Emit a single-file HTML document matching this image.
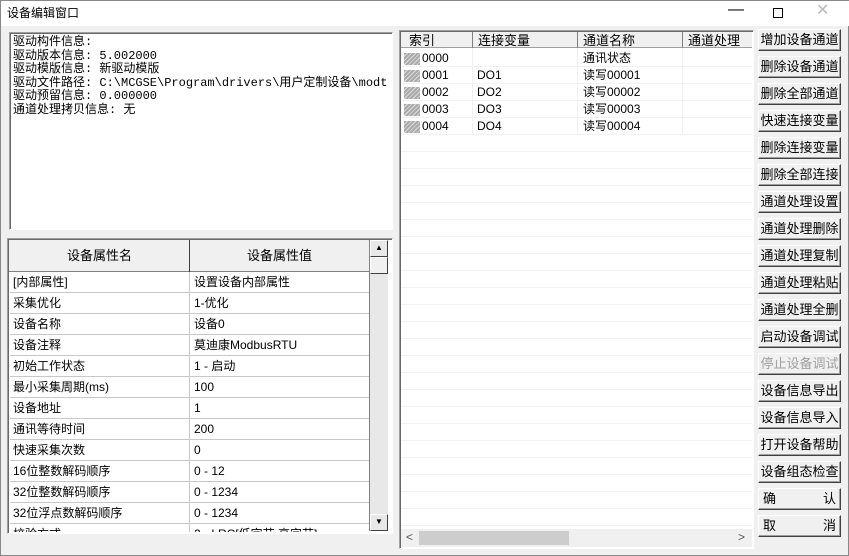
<!DOCTYPE html><html><head><meta charset="utf-8"><style>
*{box-sizing:border-box;margin:0;padding:0}
body{width:849px;height:556px;background:#f0f0f0;font-family:"Liberation Sans","Noto Sans CJK SC","WenQuanYi Zen Hei",sans-serif;font-size:12px;color:#000;position:relative;overflow:hidden;border:1px solid #888}
.a{position:absolute}
.title{left:0;top:0;width:849px;height:25px;background:#fff}
.sunk{border:1px solid;border-color:#a0a0a0 #fff #fff #a0a0a0;box-shadow:inset 1px 1px 0 #696969}
.t{position:absolute;white-space:nowrap;line-height:13px}
.btn{position:absolute;left:757px;width:83px;height:22px;background:#f0f0f0;border:1px solid;border-color:#fff #404040 #404040 #fff;box-shadow:inset -1px -1px 0 #a0a0a0;font-size:13px;line-height:20px;text-align:center;letter-spacing:0px}
.row{position:absolute;left:9px;width:359px;height:21px;border-bottom:1px solid #c8c8c8;font-size:12px;line-height:21px}
.row span{position:absolute;left:3px}
.row b{font-weight:normal;position:absolute;left:184px}
.lr{position:absolute;left:401px;width:350px;height:17px;font-size:12px;line-height:17px;border-bottom:1px solid #f2f2f2}
.ic{position:absolute;left:2px;top:3px;width:16px;height:12px;background:repeating-linear-gradient(135deg,#aaa 0 2px,#ddd 2px 3px)}
</style></head><body>
<div class="a title"></div>
<div class="t" style="left:6px;top:6px;font-size:12px">设备编辑窗口</div>
<div class="t" style="left:727px;top:2px;font-size:16px">—</div>
<div class="a" style="left:772px;top:7px;width:10px;height:10px;border:1px solid #000"></div>
<div class="t" style="left:815px;top:3px;font-size:16px;color:#bbb">✕</div>

<div class="a sunk" style="left:8px;top:31px;width:384px;height:198px;background:#fff"></div>
<div class="t" style="left:12px;top:35px;line-height:13.5px;font-family:'Liberation Mono','Noto Sans CJK SC',monospace">驱动构件信息:<br>驱动版本信息: 5.002000<br>驱动模版信息: 新驱动模版<br>驱动文件路径: C:\MCGSE\Program\drivers\用户定制设备\modt<br>驱动预留信息: 0.000000<br>通道处理拷贝信息: 无</div>

<div class="a sunk" style="left:6px;top:237px;width:386px;height:296px;background:#fff"></div>
<div class="a" style="left:8px;top:239px;width:360px;height:32px;background:#f0f0f0;border-bottom:1px solid #808080"></div>
<div class="a" style="left:188px;top:239px;width:1px;height:292px;background:#c8c8c8"></div>
<div class="a" style="left:188px;top:239px;width:1px;height:32px;background:#404040"></div>
<div class="t" style="left:66px;top:248px;font-size:13px">设备属性名</div>
<div class="t" style="left:246px;top:248px;font-size:13px">设备属性值</div>
<div class="a" style="left:368px;top:239px;width:19px;height:291px;background:#e8e8e8;border-left:1px solid #808080"></div>
<div class="a" style="left:369px;top:239px;width:18px;height:17px;border:1px solid;border-color:#fff #404040 #404040 #fff;font-size:8px;text-align:center;line-height:14px">▲</div>
<div class="a" style="left:369px;top:256px;width:18px;height:17px;border:1px solid;border-color:#fff #404040 #404040 #fff;background:#f0f0f0"></div>
<div class="a" style="left:369px;top:513px;width:18px;height:17px;border:1px solid;border-color:#fff #404040 #404040 #fff;font-size:8px;text-align:center;line-height:14px">▼</div>
<div style="position:absolute;left:0;top:0;width:368px;height:531px;overflow:hidden">
<div class="row" style="top:271px"><span>[内部属性]</span><b>设置设备内部属性</b></div>
<div class="row" style="top:292px"><span>采集优化</span><b>1-优化</b></div>
<div class="row" style="top:313px"><span>设备名称</span><b>设备0</b></div>
<div class="row" style="top:334px"><span>设备注释</span><b>莫迪康ModbusRTU</b></div>
<div class="row" style="top:355px"><span>初始工作状态</span><b>1 - 启动</b></div>
<div class="row" style="top:376px"><span>最小采集周期(ms)</span><b>100</b></div>
<div class="row" style="top:397px"><span>设备地址</span><b>1</b></div>
<div class="row" style="top:418px"><span>通讯等待时间</span><b>200</b></div>
<div class="row" style="top:439px"><span>快速采集次数</span><b>0</b></div>
<div class="row" style="top:460px"><span>16位整数解码顺序</span><b>0 - 12</b></div>
<div class="row" style="top:481px"><span>32位整数解码顺序</span><b>0 - 1234</b></div>
<div class="row" style="top:502px"><span>32位浮点数解码顺序</span><b>0 - 1234</b></div>
<div class="row" style="top:523px"><span>校验方式</span><b>2 - LRC[低字节,高字节]</b></div>
</div>

<div class="a sunk" style="left:398px;top:29px;width:355px;height:519px;background:#fff"></div>
<div class="a" style="left:400px;top:31px;width:351px;height:16px;background:#f0f0f0;border-bottom:1px solid #a0a0a0"></div>
<div class="a" style="left:471px;top:31px;width:1px;height:496px;background:#f0f0f0"></div>
<div class="a" style="left:576px;top:31px;width:1px;height:496px;background:#f0f0f0"></div>
<div class="a" style="left:681px;top:31px;width:1px;height:496px;background:#f0f0f0"></div>
<div class="a" style="left:471px;top:31px;width:1px;height:16px;background:#808080"></div>
<div class="a" style="left:576px;top:31px;width:1px;height:16px;background:#808080"></div>
<div class="a" style="left:681px;top:31px;width:1px;height:16px;background:#808080"></div>
<div class="t" style="left:408px;top:33px;font-size:13px">索引</div>
<div class="t" style="left:477px;top:33px;font-size:13px">连接变量</div>
<div class="t" style="left:582px;top:33px;font-size:13px">通道名称</div>
<div class="t" style="left:687px;top:33px;font-size:13px">通道处理</div>
<div style="position:absolute;left:0;top:0;width:752px;height:527px;overflow:hidden">
<div class="lr" style="top:49px"><i class="ic"></i><span style="position:absolute;left:20px">0000</span><span style="position:absolute;left:181px">通讯状态</span></div>
<div class="lr" style="top:66px"><i class="ic"></i><span style="position:absolute;left:20px">0001</span><span style="position:absolute;left:75px">DO1</span><span style="position:absolute;left:181px">读写00001</span></div>
<div class="lr" style="top:83px"><i class="ic"></i><span style="position:absolute;left:20px">0002</span><span style="position:absolute;left:75px">DO2</span><span style="position:absolute;left:181px">读写00002</span></div>
<div class="lr" style="top:100px"><i class="ic"></i><span style="position:absolute;left:20px">0003</span><span style="position:absolute;left:75px">DO3</span><span style="position:absolute;left:181px">读写00003</span></div>
<div class="lr" style="top:117px"><i class="ic"></i><span style="position:absolute;left:20px">0004</span><span style="position:absolute;left:75px">DO4</span><span style="position:absolute;left:181px">读写00004</span></div>
<div class="a" style="left:400px;top:134px;width:351px;height:400px;background:repeating-linear-gradient(#fff 0 16px,#f2f2f2 16px 17px)"></div>
</div>
<div class="a" style="left:400px;top:528px;width:351px;height:18px;background:#f0f0f0"></div>
<div class="t" style="left:405px;top:530px;font-size:12px;color:#555">&lt;</div>
<div class="a" style="left:418px;top:530px;width:150px;height:14px;background:#cdcdcd"></div>
<div class="t" style="left:737px;top:530px;font-size:12px;color:#555">&gt;</div>

<div class="btn" style="top:28px">增加设备通道</div>
<div class="btn" style="top:55px">删除设备通道</div>
<div class="btn" style="top:82px">删除全部通道</div>
<div class="btn" style="top:109px">快速连接变量</div>
<div class="btn" style="top:136px">删除连接变量</div>
<div class="btn" style="top:163px">删除全部连接</div>
<div class="btn" style="top:190px">通道处理设置</div>
<div class="btn" style="top:217px">通道处理删除</div>
<div class="btn" style="top:244px">通道处理复制</div>
<div class="btn" style="top:271px">通道处理粘贴</div>
<div class="btn" style="top:298px">通道处理全删</div>
<div class="btn" style="top:325px">启动设备调试</div>
<div class="btn" style="top:352px;color:#a0a0a0">停止设备调试</div>
<div class="btn" style="top:379px">设备信息导出</div>
<div class="btn" style="top:406px">设备信息导入</div>
<div class="btn" style="top:433px">打开设备帮助</div>
<div class="btn" style="top:460px">设备组态检查</div>
<div class="btn" style="top:487px;text-align:justify;text-align-last:justify;padding:0 4px">确 认</div>
<div class="btn" style="top:514px;text-align:justify;text-align-last:justify;padding:0 4px">取 消</div>
</body></html>
